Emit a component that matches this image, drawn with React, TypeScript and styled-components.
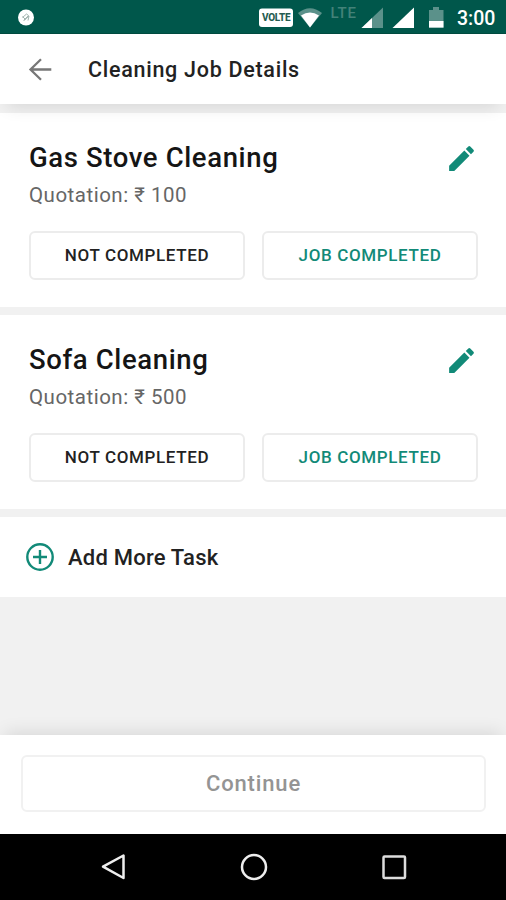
import React from "react";
import styled, { createGlobalStyle } from "styled-components";

const teal = "#128a78";

const GlobalStyle = createGlobalStyle`
  * { box-sizing: border-box; }
  body { margin: 0; background: #f1f1f1; font-family: Roboto, "Liberation Sans", sans-serif; }
  button { font: inherit; background: none; border: 0; padding: 0; margin: 0; }
`;

const Screen = styled.div`
  display: flex;
  flex-direction: column;
  width: 506px;
  height: 900px;
  overflow: hidden;
  background: #f1f1f1;
`;

const StatusBar = styled.header`
  display: flex;
  height: 34px;
  flex: none;
  justify-content: space-between;
  background: #00574b;
  border-bottom: 1px solid #004a3f;
`;

const StatusIcon = styled.svg`
  display: block;
  flex: none;
  font-family: Roboto, sans-serif;
`;

const StatusRight = styled.div`
  display: flex;
`;

const Clock = styled.span`
  width: 50px;
  padding-left: 1px;
  font-size: 19.5px;
  font-weight: 500;
  line-height: 37px;
  color: #fff;
`;

const AppBar = styled.div`
  display: flex;
  flex: none;
  align-items: center;
  height: 70px;
  padding-left: 25px;
  background: #fff;
  box-shadow: 0 10px 16px -7px rgba(0, 0, 0, 0.11);
  z-index: 1;
`;

const IconButton = styled.button`
  display: flex;
  flex: none;
`;

const PageTitle = styled.h1`
  margin: 1px 0 0 33px;
  font-size: 21.5px;
  font-weight: 500;
  letter-spacing: 0.72px;
  color: #222;
`;

const TaskList = styled.main`
  display: flex;
  flex: 1;
  flex-direction: column;
  gap: 8px;
  padding-top: 9px;
`;

const Card = styled.section`
  height: 194px;
  padding: 28px 28px 0 29px;
  background: #fff;
`;

const CardHead = styled.div`
  display: flex;
  justify-content: space-between;
  align-items: center;
  height: 34px;
`;

const TaskName = styled.h2`
  margin: 0 0 2px;
  font-size: 27.5px;
  font-weight: 500;
  letter-spacing: 0.62px;
  color: #151515;
`;

const Quotation = styled.p`
  margin: 6px 0 0;
  font-size: 20.5px;
  line-height: 28px;
  letter-spacing: 0.5px;
  color: #666;
`;

const Actions = styled.div`
  display: grid;
  grid-template-columns: 1fr 1fr;
  gap: 17px;
  margin-top: 22px;
`;

const OutlineButton = styled.button<{ $accent?: boolean }>`
  height: 49px;
  && {
    padding-bottom: 2px;
    border: 2px solid #ececec;
    font-size: 17px;
    font-weight: 500;
  }
  border-radius: 6px;
  letter-spacing: 0.63px;
  color: ${(p) => (p.$accent ? teal : "#222")};
`;

const AddTask = styled.button`
  display: flex;
  align-items: center;
  height: 80px;
  gap: 13px;
  && {
    padding: 0 25px;
    background: #fff;
    font-size: 22px;
    font-weight: 500;
  }
  letter-spacing: 0.22px;
  color: #222;
`;

const Footer = styled.footer`
  flex: none;
  height: 99px;
  padding: 20px 20px 0 21px;
  background: #fff;
  box-shadow: 0 -8px 16px -5px rgba(0, 0, 0, 0.1);
`;

const Continue = styled.button`
  width: 100%;
  height: 57px;
  && {
    border: 2px solid #f1f1f1;
    font-size: 22px;
    font-weight: 500;
  }
  border-radius: 6px;
  letter-spacing: 0.85px;
  color: #949494;
`;

const NavBar = styled.nav`
  display: flex;
  flex: none;
  align-items: center;
  justify-content: space-between;
  height: 66px;
  padding: 0 97px 0 98px;
  background: #000;
`;

const PencilIcon = () => (
  <svg width="33" height="33" viewBox="0 0 24 24" fill={teal}>
    <path d="M3 17.25V21h3.75L17.81 9.94l-3.75-3.75L3 17.25zM20.71 7.04a.996.996 0 0 0 0-1.41l-2.34-2.34a.996.996 0 0 0-1.41 0l-1.83 1.83 3.75 3.75 1.83-1.83z" />
  </svg>
);

const tasks = [
  { name: "Gas Stove Cleaning", price: 100 },
  { name: "Sofa Cleaning", price: 500 },
];

export default function App() {
  return (
    <>
      <GlobalStyle />
      <Screen>
        <StatusBar>
          <StatusIcon width="50" height="33">
            <circle cx="26" cy="17.5" r="8" fill="#fff" />
            <path d="M22.5 17.5l4-3.5 2 1.5-5 5M24 20.5l5-4.5-1 4.5M22.5 16.5l3 3" fill="none" stroke="#a3b5b0" strokeWidth="1" />
          </StatusIcon>
          <StatusRight>
            <StatusIcon width="200" height="33" viewBox="256 0 200 33">
              <rect x="259" y="8.500" width="34" height="18.500" rx="3" fill="#fff" />
              <text x="262" y="21" fontSize="10" fontWeight="800" fill="#255c52" textLength="28.500">VOLTE</text>
              <path d="M298 13Q310 3.5 322 13L310 27.500z" fill="#5b918a" />
              <path d="M301 15.500Q310 9.500 319 15.500L310 27.500z" fill="#fff" />
              <text x="330.500" y="18" fontSize="15" fontWeight="500" fill="#438279" textLength="25.500">LTE</text>
              <path d="M361.500 28L383 7.500V28z" fill="#5b918a" />
              <path d="M361.500 28L372 18V28z" fill="#fff" />
              <path d="M392.500 28L414 7.500V28z" fill="#fff" />
              <path d="M429 10h4V7h6v3h4.500v18H429z" fill="#5b918a" />
              <path d="M429 21h14.500v6.500H429z" fill="#fff" />
            </StatusIcon>
            <Clock>3:00</Clock>
          </StatusRight>
        </StatusBar>
        <AppBar>
          <IconButton aria-label="Back">
            <svg width="30" height="30" viewBox="0 0 30 30" fill="none" stroke="#777" strokeWidth="2.300">
              <path d="M26.300 15.500H5.500M16 5.200L5.500 15.500L16 25.800" />
            </svg>
          </IconButton>
          <PageTitle>Cleaning Job Details</PageTitle>
        </AppBar>
        <TaskList>
          {tasks.map((t) => (
            <Card key={t.name}>
              <CardHead>
                <TaskName>{t.name}</TaskName>
                <IconButton aria-label="Edit"><PencilIcon /></IconButton>
              </CardHead>
              <Quotation>Quotation: ₹ {t.price}</Quotation>
              <Actions>
                <OutlineButton>NOT COMPLETED</OutlineButton>
                <OutlineButton $accent>JOB COMPLETED</OutlineButton>
              </Actions>
            </Card>
          ))}
          <AddTask>
            <svg width="30" height="30" viewBox="0 0 30 30" fill="none" stroke={teal} strokeWidth="2.400">
              <circle cx="15" cy="15" r="12.700" />
              <path d="M15 8v14M8 15h14" />
            </svg>
            Add More Task
          </AddTask>
        </TaskList>
        <Footer>
          <Continue>Continue</Continue>
        </Footer>
        <NavBar>
          <svg width="30" height="30" viewBox="0 0 30 30" fill="none" stroke="#eee" strokeWidth="2.500" strokeLinejoin="round">
            <path d="M25.500 3.500v22.500L5 14.700z" />
          </svg>
          <svg width="30" height="30" viewBox="0 0 30 30" fill="none" stroke="#eee" strokeWidth="2.500">
            <circle cx="15" cy="15" r="12" />
          </svg>
          <svg width="30" height="30" viewBox="0 0 30 30" fill="none" stroke="#ddd" strokeWidth="2.500">
            <rect x="4.500" y="4.500" width="21.500" height="21.500" rx="1" />
          </svg>
        </NavBar>
      </Screen>
    </>
  );
}
